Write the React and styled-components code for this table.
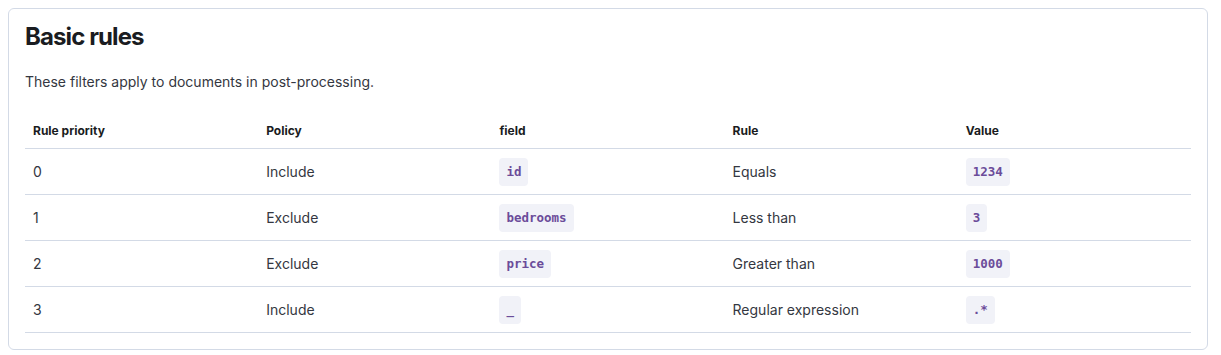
import React from 'react';
import styled, { createGlobalStyle } from 'styled-components';

const GlobalStyle = createGlobalStyle`
  body {
    margin: 8px;
    background: #ffffff;
    font-family: Inter, "Liberation Sans", sans-serif;
    color: #343741;
  }
`;

const Panel = styled.section`
  width: 1200px;
  box-sizing: border-box;
  border: 1px solid #d3dae6;
  border-radius: 6px;
  padding: 13px 16px 16px;
  background: #fff;
`;

const Title = styled.h2`
  margin: 0;
  font-size: 24px;
  line-height: 29px;
  font-weight: 700;
  color: #1a1c21;
  letter-spacing: -0.9px;
`;

const Description = styled.p`
  margin: 21px 0 22px;
  font-size: 14px;
  line-height: 20px;
  color: #343741;
`;

const Table = styled.table`
  width: 100%;
  table-layout: fixed;
  border-collapse: collapse;
`;

const HeadCell = styled.th`
  text-align: left;
  padding: 8px;
  font-size: 12px;
  line-height: 18px;
  font-weight: 700;
  color: #1a1c21;
  border-bottom: 1px solid #d3dae6;
`;

const Cell = styled.td`
  height: 45px;
  padding: 0 8px;
  font-size: 14px;
  line-height: 20px;
  color: #343741;
  vertical-align: middle;
  border-bottom: 1px solid #d3dae6;
`;

const Code = styled.code`
  display: inline-block;
  padding: 6px 7px;
  border-radius: 4px;
  background: #f1f2f8;
  color: #6b4c9a;
  font-family: "DejaVu Sans Mono", "Liberation Mono", monospace;
  font-size: 12.5px;
  line-height: 16px;
  font-weight: 700;
`;

const columns = ['Rule priority', 'Policy', 'field', 'Rule', 'Value'];

const rules = [
  { priority: 0, policy: 'Include', field: 'id', rule: 'Equals', value: '1234' },
  { priority: 1, policy: 'Exclude', field: 'bedrooms', rule: 'Less than', value: '3' },
  { priority: 2, policy: 'Exclude', field: 'price', rule: 'Greater than', value: '1000' },
  { priority: 3, policy: 'Include', field: '_', rule: 'Regular expression', value: '.*' },
];

const App = () => (
  <>
    <GlobalStyle />
    <Panel>
      <Title>Basic rules</Title>
      <Description>These filters apply to documents in post-processing.</Description>
      <Table>
        <thead>
          <tr>
            {columns.map((c) => (
              <HeadCell key={c}>{c}</HeadCell>
            ))}
          </tr>
        </thead>
        <tbody>
          {rules.map((r) => (
            <tr key={r.priority}>
              <Cell>{r.priority}</Cell>
              <Cell>{r.policy}</Cell>
              <Cell>
                <Code>{r.field}</Code>
              </Cell>
              <Cell>{r.rule}</Cell>
              <Cell>
                <Code>{r.value}</Code>
              </Cell>
            </tr>
          ))}
        </tbody>
      </Table>
    </Panel>
  </>
);

export default App;
